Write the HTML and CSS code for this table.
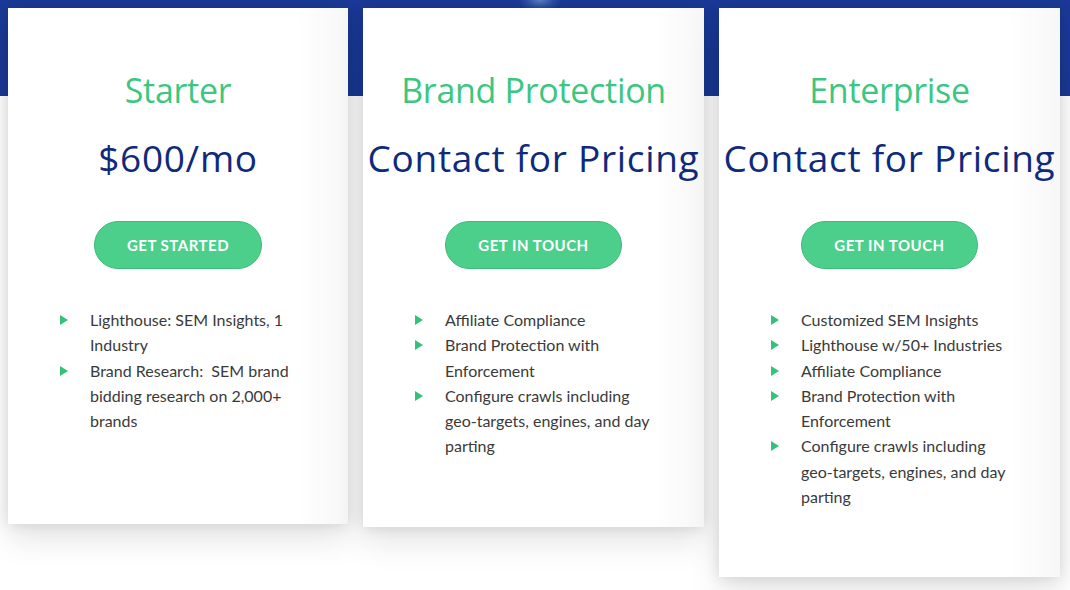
FILE: index.html
```html
<!DOCTYPE html>
<html lang="en">
<head>
<meta charset="utf-8">
<title>Pricing</title>
<link rel="stylesheet" href="styles.css">
</head>
<body>
<section class="pricing">
  <div class="cards">
    <article class="card card--starter">
      <h2 class="plan">Starter</h2>
      <p class="price">$600/mo</p>
      <a class="btn" href="#">GET STARTED</a>
      <ul class="features">
        <li>Lighthouse: SEM Insights, 1 Industry</li>
        <li>Brand Research:&nbsp; SEM brand bidding research on 2,000+ brands</li>
      </ul>
    </article>
    <article class="card">
      <h2 class="plan">Brand Protection</h2>
      <p class="price">Contact for Pricing</p>
      <a class="btn" href="#">GET IN TOUCH</a>
      <ul class="features">
        <li>Affiliate Compliance</li>
        <li>Brand Protection with Enforcement</li>
        <li>Configure crawls including geo-targets, engines, and day parting</li>
      </ul>
    </article>
    <article class="card">
      <h2 class="plan">Enterprise</h2>
      <p class="price">Contact for Pricing</p>
      <a class="btn" href="#">GET IN TOUCH</a>
      <ul class="features">
        <li>Customized SEM Insights</li>
        <li>Lighthouse w/50+ Industries</li>
        <li>Affiliate Compliance</li>
        <li>Brand Protection with Enforcement</li>
        <li>Configure crawls including geo-targets, engines, and day parting</li>
      </ul>
    </article>
  </div>
</section>
</body>
</html>
```

FILE: styles.css
```css
* { box-sizing: border-box; }

html, body {
  margin: 0;
  padding: 0;
  background: #ffffff;
}

body {
  width: 1070px;
  height: 590px;
  overflow: hidden;
  font-family: "Lato", "Open Sans", sans-serif;
}

.pricing {
  height: 590px;
  background:
    radial-gradient(ellipse 22px 12px at 540px 0, #5b82c4 0%, rgba(50,90,170,0.7) 60%, rgba(27,58,152,0) 100%),
    linear-gradient(#1b3a98 0, #1a3995 96px, #ffffff 96px, #ffffff 100%);
  background-repeat: no-repeat;
  padding: 8px 0 0 8px;
}

.cards {
  display: grid;
  grid-template-columns: 340px 341px 341px;
  column-gap: 15px;
  align-items: start;
}

.card {
  background: linear-gradient(90deg, #ffffff 0, #ffffff 85%, #f7f7f7 100%);
  box-shadow: 0 16px 30px rgba(0, 0, 0, 0.10), 0 0 14px rgba(0, 0, 0, 0.12);
  padding: 62px 0 68px;
  display: flex;
  flex-direction: column;
  align-items: center;
}

.card--starter {
  min-height: 516px;
}

.plan {
  margin: 0;
  font-family: "Open Sans", sans-serif;
  font-weight: 400;
  font-size: 34px;
  line-height: 40px;
  letter-spacing: -0.3px;
  color: #3cc67f;
  white-space: nowrap;
}

.price {
  margin: 26px 0 0;
  font-family: "Open Sans", sans-serif;
  font-weight: 400;
  font-size: 37px;
  line-height: 44px;
  letter-spacing: 0.7px;
  color: #0f2a7c;
  white-space: nowrap;
}

.btn {
  margin-top: 41px;
  height: 48px;
  padding: 0 32px;
  display: flex;
  align-items: center;
  justify-content: center;
  border-radius: 24px;
  background: #4ccf8b;
  border: 1px solid #3dbd79;
  color: #ffffff;
  font-family: "Lato", sans-serif;
  font-weight: 700;
  font-size: 15px;
  letter-spacing: 0.5px;
  text-decoration: none;
}

.features {
  align-self: stretch;
  list-style: none;
  margin: 38px 0 0 52px;
  padding: 0;
  width: 242px;
}

.features li {
  display: flex;
  align-items: flex-start;
  font-size: 16px;
  line-height: 25.3px;
  color: #3a3a3a;
}

.features li::before {
  content: "";
  flex: none;
  width: 0;
  height: 0;
  margin: 8px 22px 0 0;
  border-top: 5px solid transparent;
  border-bottom: 5px solid transparent;
  border-left: 8px solid #34c27a;
}
```
